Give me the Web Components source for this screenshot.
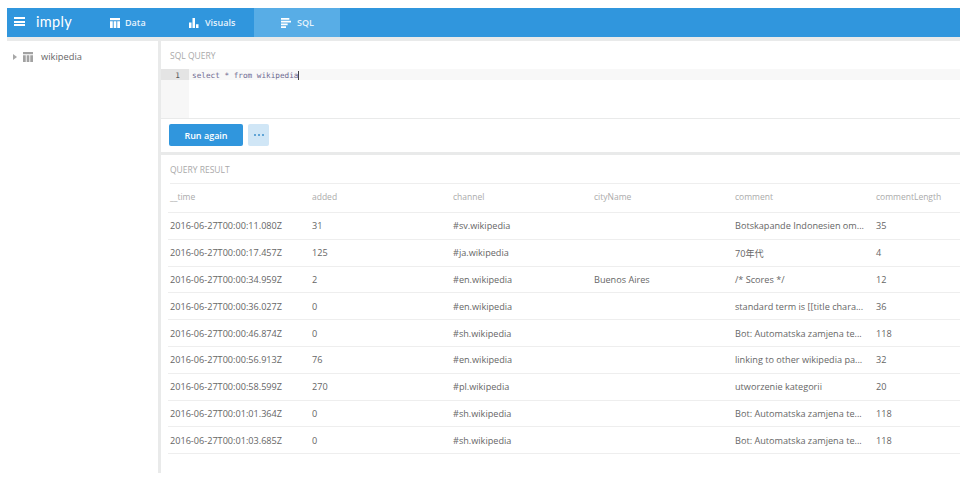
<!DOCTYPE html>
<html>
<head>
<meta charset="utf-8">
<style>
	html, body { background: #fff; }
	body {
		margin: 8px 8px 0 7px;
		font-family: "Open Sans", "Noto Sans CJK JP", sans-serif;
		overflow: hidden;
	}
</style>
</head>
<body>
<imply-app></imply-app>
<script>
const ICONS = {
	table: '<path d="M0 0h12v2.5H0zM0 3.5h3.3V11H0zM4.4 3.5h3.2V11H4.4zM8.7 3.5H12V11H8.7z"/>',
	bars: '<path d="M0 5h3v6H0zM4.2 0h3v11h-3zM8.4 7h3v4h-3z"/>',
	lines: '<path d="M0 0h10v2H0zM0 3h12v2H0zM0 6h8v2H0zM0 9h6v2H0z"/>'
};

class ImplyHeader extends HTMLElement {
	constructor() {
		super();
		this.attachShadow({ mode: 'open' });
		this.shadowRoot.innerHTML = `
			<style>
				:host { display: flex; height: 29px; background: #3096dd; color: #fff; }
				.burger { box-sizing: border-box; flex: none; width: 11px; height: 9px; margin: 9px 0 0 7px; border-top: 2px solid #fff; border-bottom: 2px solid #fff; position: relative; }
				.burger::after { content: ''; position: absolute; left: 0; right: 0; top: 1.5px; height: 2px; background: #fff; }
				.logo { font: 400 14.5px/28px Lato, sans-serif; letter-spacing: 0.3px; margin-left: 11px; width: 63px; }
				nav { display: flex; }
			</style>
			<div class="burger"></div>
			<div class="logo">imply</div>
			<nav><slot></slot></nav>
		`;
	}
}

class NavItem extends HTMLElement {
	constructor() {
		super();
		this.attachShadow({ mode: 'open' });
		const icon = ICONS[this.getAttribute('icon')];
		this.shadowRoot.innerHTML = `
			<style>
				:host { display: flex; align-items: center; gap: var(--g, 6px); box-sizing: border-box; height: 29px; width: var(--w); padding-left: var(--p); font: 600 9px "Open Sans", sans-serif; color: #e6f3fc; }
				:host([active]) { background: #58ade6; }
				svg { width: 10px; height: 10px; fill: #fff; flex: none; }
			</style>
			<svg viewBox="0 0 12 11" preserveAspectRatio="none">${icon}</svg>
			<slot></slot>
		`;
	}
}

class SideTree extends HTMLElement {
	constructor() {
		super();
		this.attachShadow({ mode: 'open' });
		this.shadowRoot.innerHTML = `
			<style>
				:host { display: block; width: 151px; flex: none; box-sizing: border-box; padding: 9px 0 0 6px; font: 400 9.3px/14px "Open Sans", sans-serif; color: #666; }
				.row { display: flex; align-items: center; }
				.arrow { width: 0; height: 0; border-left: 4px solid #a8a8a8; border-top: 3px solid transparent; border-bottom: 3px solid transparent; }
				svg { width: 10px; height: 10px; fill: #a2a2a2; margin: 0 8px 0 6px; }
			</style>
			<div class="row">
				<span class="arrow"></span>
				<svg viewBox="0 0 12 11" preserveAspectRatio="none">${ICONS.table}</svg>
				<span>wikipedia</span>
			</div>
		`;
	}
}

class SqlEditor extends HTMLElement {
	constructor() {
		super();
		this.attachShadow({ mode: 'open' });
		this.shadowRoot.innerHTML = `
			<style>
				:host { display: block; height: 114px; box-sizing: border-box; border-bottom: 3px solid #e9eaea; }
				.title { height: 28px; box-sizing: border-box; padding: 8px 0 0 9px; font: 400 8.5px/14px "Open Sans", sans-serif; color: #a9a9a9; }
				.code { display: flex; height: 49px; border-bottom: 1px solid #e9eaea; font: 7.7px/13px "DejaVu Sans Mono", monospace; }
				.gutter { width: 28px; background: #f7f7f7; color: #555; text-align: right; }
				.gutter div { height: 11px; padding-right: 9px; background: #e4e4e4; }
				.line { flex: 1; height: 11px; padding-left: 3px; background: #f8f8f8; color: #6f6b92; white-space: pre; }
				.cursor { border-right: 1px solid #444; }
				.tools { display: flex; gap: 5px; padding: 5px 0 0 8px; }
				.run { width: 74px; height: 22px; border-radius: 2px; background: #3096dd; color: #fff; font: 600 9px/23px "Open Sans", sans-serif; text-align: center; }
				.more { display: flex; align-items: center; justify-content: center; gap: 2px; width: 21px; height: 22px; border-radius: 2px; background: #d0e6f6; }
				.more i { width: 2px; height: 2px; border-radius: 50%; background: #3d8fcb; }
			</style>
			<div class="title">SQL QUERY</div>
			<div class="code">
				<div class="gutter"><div>1</div></div>
				<div class="line"><span class="cursor">select * from wikipedia</span></div>
			</div>
			<div class="tools">
				<div class="run">Run again</div>
				<div class="more"><i></i><i></i><i></i></div>
			</div>
		`;
	}
}

const COLUMNS = ['__time', 'added', 'channel', 'cityName', 'comment', 'commentLength'];
const ROWS = [
	['2016-06-27T00:00:11.080Z', '31', '#sv.wikipedia', '', 'Botskapande Indonesien om...', '35'],
	['2016-06-27T00:00:17.457Z', '125', '#ja.wikipedia', '', '70年代', '4'],
	['2016-06-27T00:00:34.959Z', '2', '#en.wikipedia', 'Buenos Aires', '/* Scores */', '12'],
	['2016-06-27T00:00:36.027Z', '0', '#en.wikipedia', '', 'standard term is [[title chara...', '36'],
	['2016-06-27T00:00:46.874Z', '0', '#sh.wikipedia', '', 'Bot: Automatska zamjena te...', '118'],
	['2016-06-27T00:00:56.913Z', '76', '#en.wikipedia', '', 'linking to other wikipedia pa...', '32'],
	['2016-06-27T00:00:58.599Z', '270', '#pl.wikipedia', '', 'utworzenie kategorii', '20'],
	['2016-06-27T00:01:01.364Z', '0', '#sh.wikipedia', '', 'Bot: Automatska zamjena te...', '118'],
	['2016-06-27T00:01:03.685Z', '0', '#sh.wikipedia', '', 'Bot: Automatska zamjena te...', '118']
];

class ResultTable extends HTMLElement {
	constructor() {
		super();
		this.attachShadow({ mode: 'open' });
		const cells = (row) => row.map((c) => `<span>${c}</span>`).join('');
		this.shadowRoot.innerHTML = `
			<style>
				:host { display: block; padding-left: 7px; font-family: "Open Sans", "Noto Sans CJK JP", sans-serif; }
				.title { height: 29px; box-sizing: border-box; padding-top: 8px; margin-left: 2px; font-size: 8.5px; line-height: 14px; color: #a9a9a9; border-bottom: 1px solid #eeeeee; }
				.row { display: grid; grid-template-columns: 142px repeat(5, 141px); align-items: center; box-sizing: border-box; height: 26.8px; border-bottom: 1px solid #eeeeee; padding-left: 2px; font-size: 9.15px; color: #666; white-space: nowrap; }
				.head { height: 29px; padding-bottom: 3px; font-size: 8.5px; color: #ababab; }
			</style>
			<div class="title">QUERY RESULT</div>
			<div class="row head">${cells(COLUMNS)}</div>
			${ROWS.map((r) => `<div class="row">${cells(r)}</div>`).join('')}
		`;
	}
}

class ImplyApp extends HTMLElement {
	constructor() {
		super();
		this.attachShadow({ mode: 'open' });
		this.shadowRoot.innerHTML = `
			<style>
				:host { display: block; width: 953px; }
				.body { display: flex; height: 432px; border-top: 4px solid #e9eaea; }
				main { flex: 1; min-width: 0; overflow: hidden; border-left: 3px solid #e9eaea; }
			</style>
			<imply-header>
				<nav-item icon="table" style="--w:79px;--p:11px;--g:5px">Data</nav-item>
				<nav-item icon="bars" style="--w:76px;--p:11px">Visuals</nav-item>
				<nav-item icon="lines" active style="--w:86px;--p:27px">SQL</nav-item>
			</imply-header>
			<div class="body">
				<side-tree></side-tree>
				<main>
					<sql-editor></sql-editor>
					<result-table></result-table>
				</main>
			</div>
		`;
	}
}

customElements.define('imply-header', ImplyHeader);
customElements.define('nav-item', NavItem);
customElements.define('side-tree', SideTree);
customElements.define('sql-editor', SqlEditor);
customElements.define('result-table', ResultTable);
customElements.define('imply-app', ImplyApp);
</script>
</body>
</html>
